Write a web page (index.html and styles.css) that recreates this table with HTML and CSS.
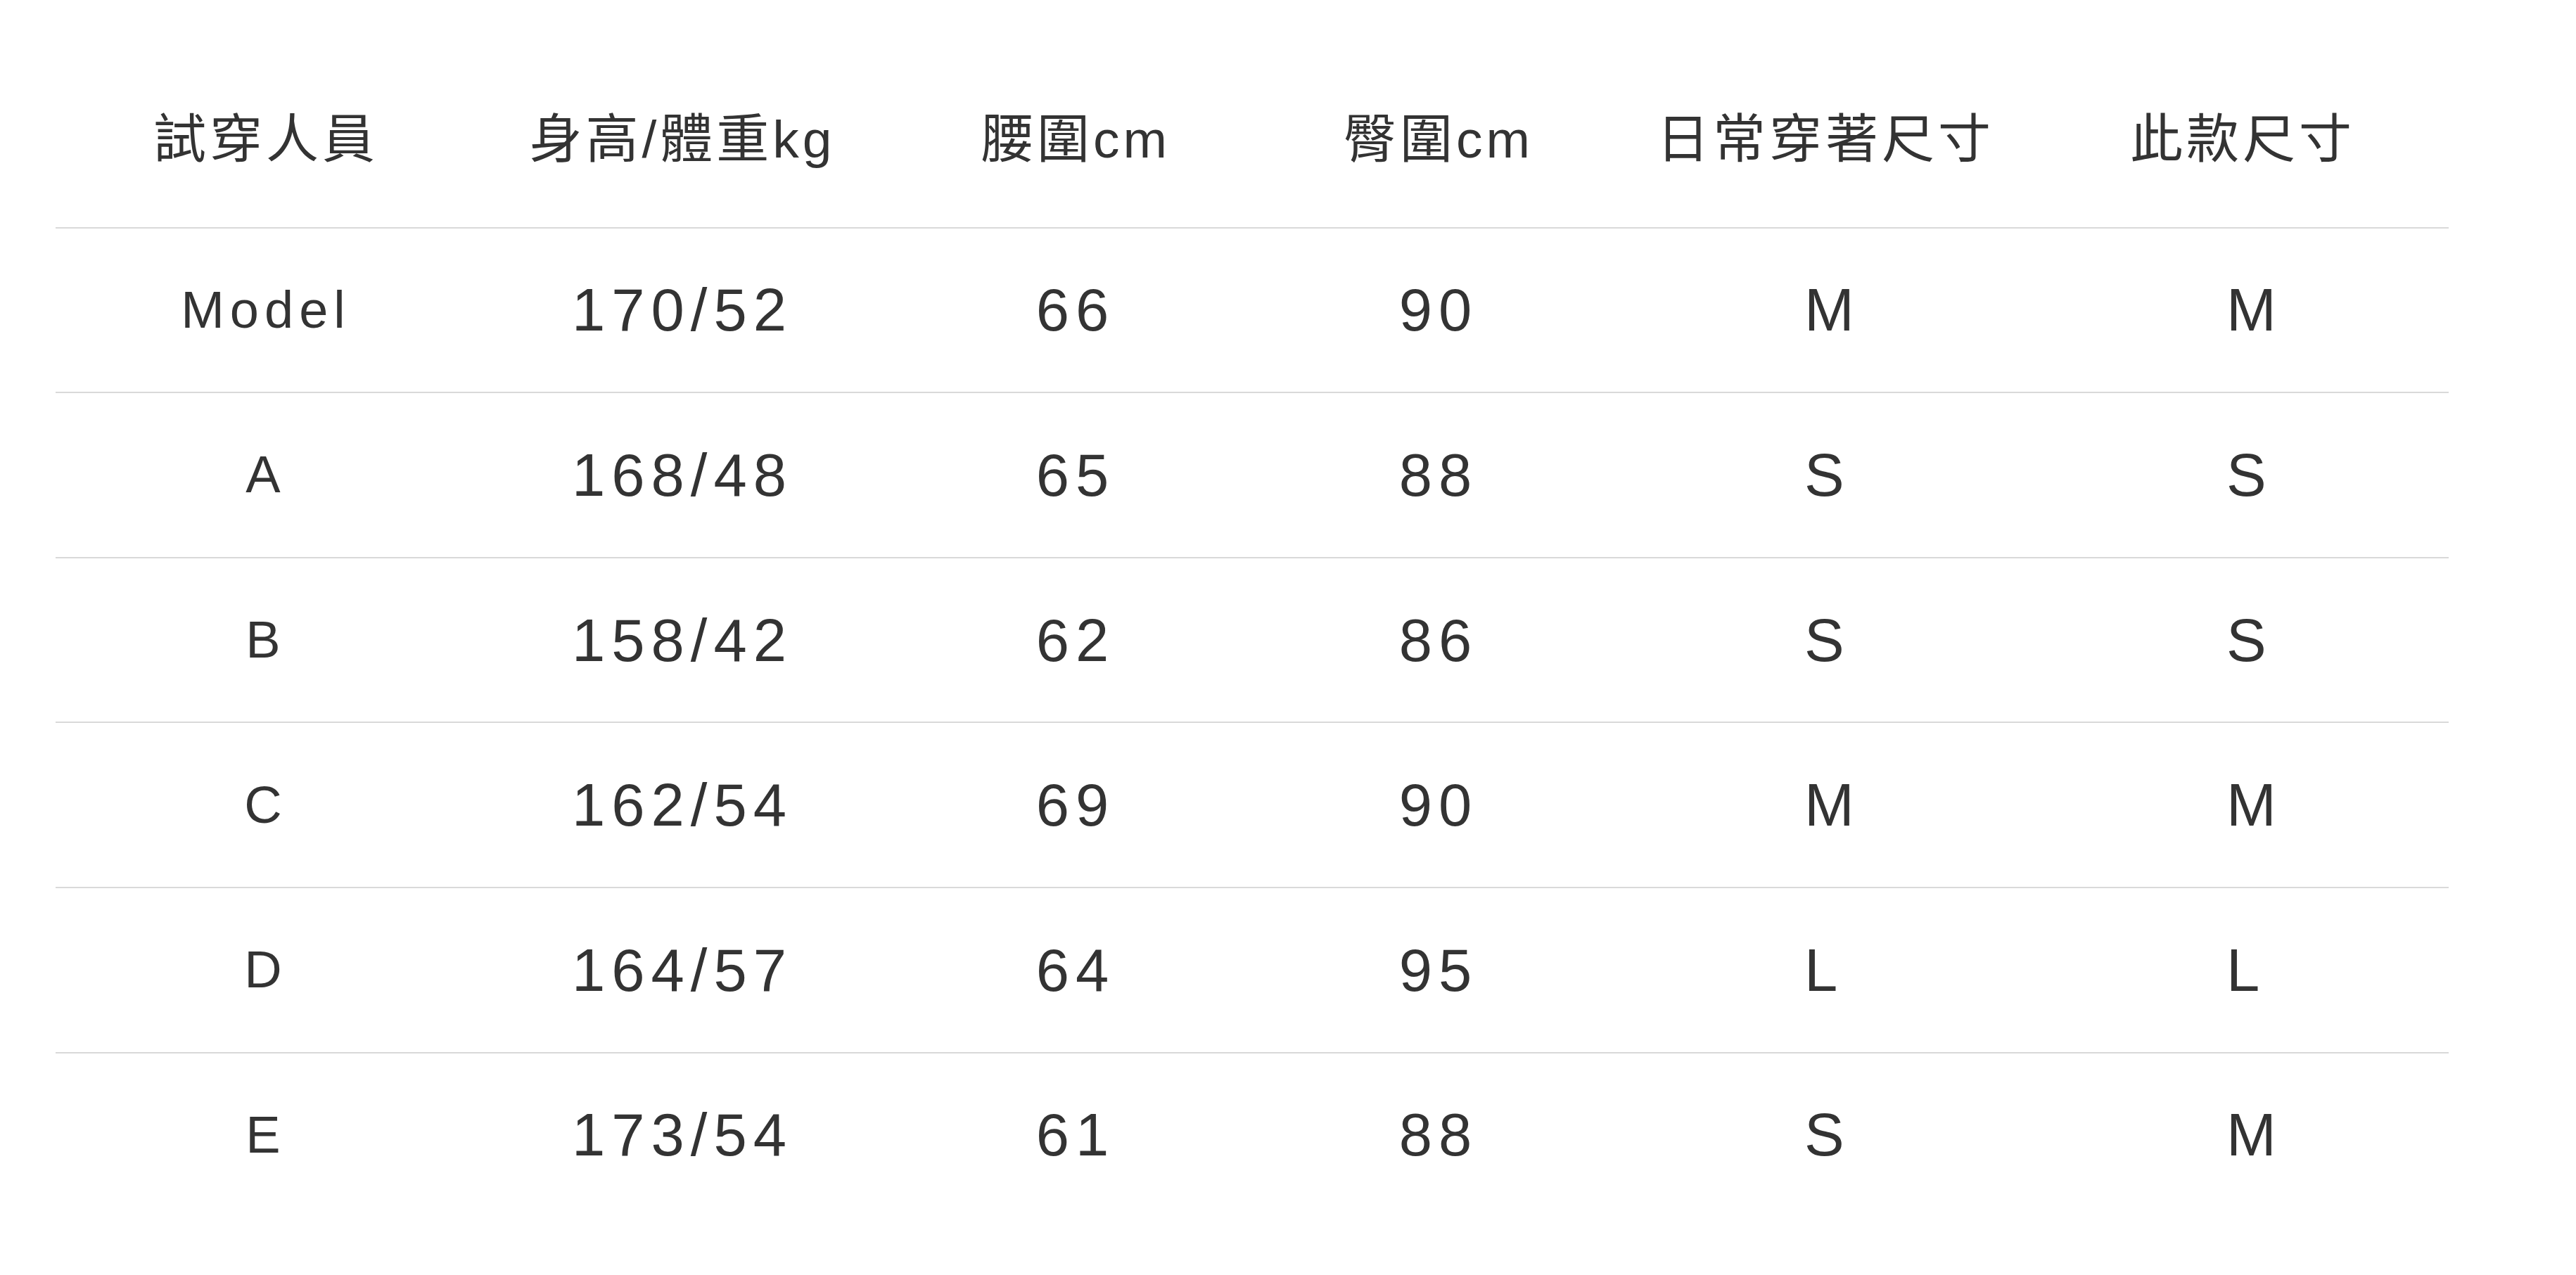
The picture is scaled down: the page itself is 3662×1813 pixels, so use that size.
FILE: index.html
```html
<!DOCTYPE html>
<html lang="zh-Hant">
<head>
<meta charset="utf-8">
<title>試穿報告</title>
<link rel="stylesheet" href="styles.css">
</head>
<body>
<main class="page">
  <div class="fit-table">
    <div class="row head">
      <div class="cell">試穿人員</div>
      <div class="cell">身高/體重kg</div>
      <div class="cell">腰圍cm</div>
      <div class="cell">臀圍cm</div>
      <div class="cell">日常穿著尺寸</div>
      <div class="cell">此款尺寸</div>
    </div>
    <div class="row">
      <div class="cell name">Model</div>
      <div class="cell num">170/52</div>
      <div class="cell num">66</div>
      <div class="cell num">90</div>
      <div class="cell size">M</div>
      <div class="cell size">M</div>
    </div>
    <div class="row">
      <div class="cell name">A</div>
      <div class="cell num">168/48</div>
      <div class="cell num">65</div>
      <div class="cell num">88</div>
      <div class="cell size">S</div>
      <div class="cell size">S</div>
    </div>
    <div class="row">
      <div class="cell name">B</div>
      <div class="cell num">158/42</div>
      <div class="cell num">62</div>
      <div class="cell num">86</div>
      <div class="cell size">S</div>
      <div class="cell size">S</div>
    </div>
    <div class="row">
      <div class="cell name">C</div>
      <div class="cell num">162/54</div>
      <div class="cell num">69</div>
      <div class="cell num">90</div>
      <div class="cell size">M</div>
      <div class="cell size">M</div>
    </div>
    <div class="row">
      <div class="cell name">D</div>
      <div class="cell num">164/57</div>
      <div class="cell num">64</div>
      <div class="cell num">95</div>
      <div class="cell size">L</div>
      <div class="cell size">L</div>
    </div>
    <div class="row">
      <div class="cell name">E</div>
      <div class="cell num">173/54</div>
      <div class="cell num">61</div>
      <div class="cell num">88</div>
      <div class="cell size">S</div>
      <div class="cell size">M</div>
    </div>
  </div>
</main>
</body>
</html>
```

FILE: styles.css
```css
html, body {
  margin: 0;
  padding: 0;
  background: #ffffff;
}

.page {
  padding: 88px 0 0 79px;
  font-family: "Liberation Sans", "Noto Sans CJK TC", sans-serif;
  color: #333333;
}

.fit-table {
  width: 3402px;
}

.row {
  display: grid;
  grid-template-columns: 598px 586px 532px 500px 600px 586px;
  height: 234.6px;
  box-sizing: border-box;
}

.row + .row {
  border-top: 2px solid #d9d9d9;
}

.cell {
  display: flex;
  align-items: center;
  justify-content: center;
  white-space: nowrap;
  line-height: 1;
}

.head .cell {
  font-size: 75px;
  letter-spacing: 5px;
  padding-bottom: 14px;
}

.name {
  font-size: 74px;
  letter-spacing: 8px;
}

.num,
.size {
  font-size: 85px;
  letter-spacing: 9px;
}

.size {
  justify-content: flex-start;
  padding-left: 270px;
}
```
